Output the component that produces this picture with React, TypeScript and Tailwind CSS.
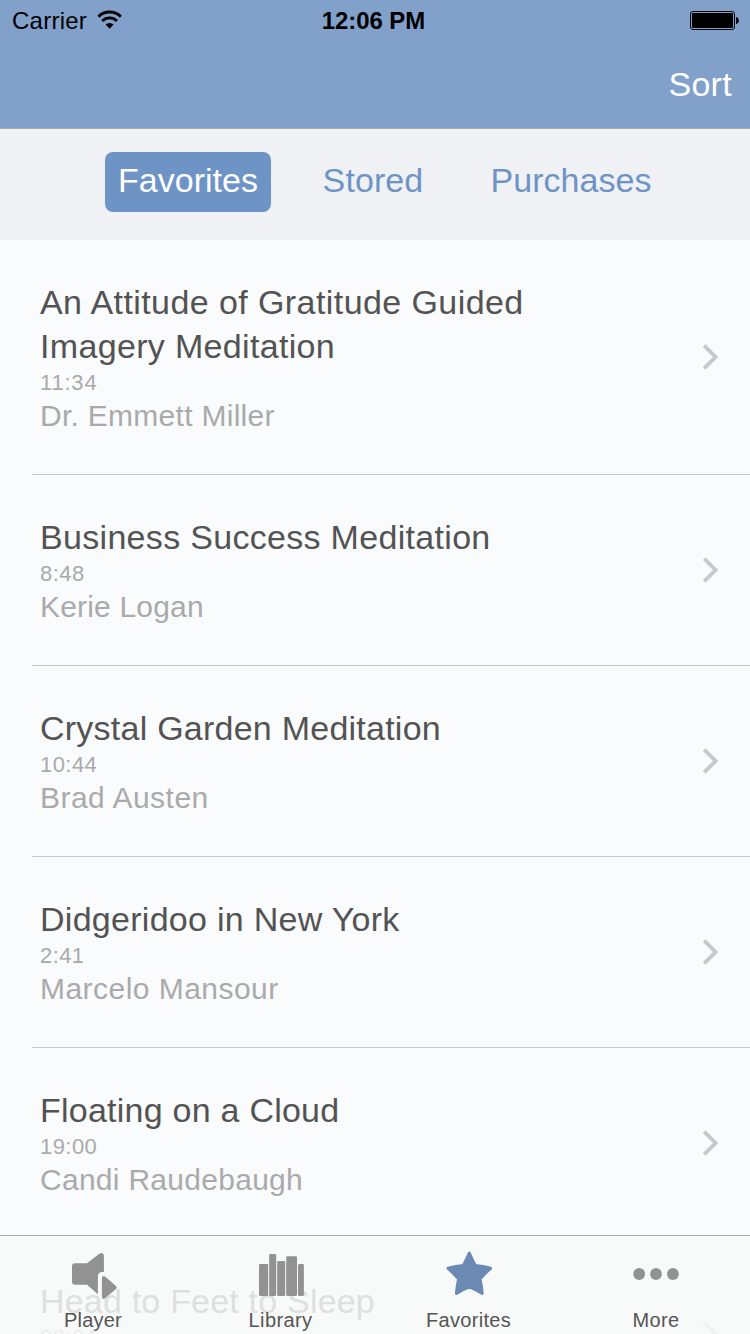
import React from "react";

const tabs = [
  { label: "Favorites", cls: "w-[166px] bg-[#6e94c6] text-white" },
  { label: "Stored", cls: "ml-[19px] w-[166px] text-[#6e94c6] tracking-[0.1px]" },
  { label: "Purchases", cls: "w-[230px] text-[#6e94c6] tracking-[0.05px]" },
];

const tracks = [
  {
    title: [
      { text: "An Attitude of Gratitude Guided", cls: "tracking-[0.42px]" },
      { text: "Imagery Meditation", cls: "tracking-[0.33px]" },
    ],
    time: "11:34", timeCls: "tracking-[0.8px]", artist: "Dr. Emmett Miller", cls: "h-[235px] border-[#c8c7cc]", artistCls: "tracking-[0.28px]",
  },
  { title: [{ text: "Business Success Meditation", cls: "tracking-[0.31px]" }], time: "8:48", timeCls: "tracking-[0.5px]", artist: "Kerie Logan", cls: "h-[191px] border-[#c8c7cc]", artistCls: "tracking-[0.18px]" },
  { title: [{ text: "Crystal Garden Meditation", cls: "tracking-[0.24px]" }], time: "10:44", timeCls: "tracking-[0.45px]", artist: "Brad Austen", cls: "h-[191px] border-[#c8c7cc]", artistCls: "tracking-[0.48px]" },
  { title: [{ text: "Didgeridoo in New York", cls: "tracking-[0.28px]" }], time: "2:41", timeCls: "tracking-[0.4px]", artist: "Marcelo Mansour", cls: "h-[191px] border-[#c8c7cc]", artistCls: "tracking-[0.46px]" },
  { title: [{ text: "Floating on a Cloud", cls: "tracking-[0.24px]" }], time: "19:00", timeCls: "tracking-[0.45px]", artist: "Candi Raudebaugh", cls: "h-[191px] border-transparent", artistCls: "tracking-[0.28px]" },
  { title: [{ text: "Head to Feet to Sleep", cls: "tracking-[0.2px]" }], time: "20:04", timeCls: "tracking-[0.45px]", artist: "", cls: "h-[191px] border-[#c8c7cc]", artistCls: "" },
];

function Wifi() {
  return (
    <svg width="26" height="20" viewBox="0 0 26 20" fill="none" stroke="#000">
      <path d="M2.400 6.700 A15.800 15.800 0 0 1 24.800 6.700" strokeWidth="3" />
      <path d="M6.200 10.900 A10.600 10.600 0 0 1 21 10.900" strokeWidth="2.800" />
      <path d="M9.600 14.500 A6 6 0 0 1 17.600 14.500 L13.600 18.700 Z" fill="#000" stroke="none" />
    </svg>
  );
}

function Battery() {
  return (
    <svg width="50" height="20" viewBox="0 0 50 20">
      <rect x="0.5" y="1.5" width="44" height="18" rx="2.6" fill="none" stroke="#000" />
      <rect x="2" y="3" width="41" height="15" rx="1.3" />
      <path d="M46 7 C49.8 7.5 49.8 13.5 46 14 Z" />
    </svg>
  );
}

function Chevron() {
  return (
    <svg width="18" height="28" viewBox="0 0 18 28" fill="none" stroke="#c7c7cc" strokeWidth="3.8">
      <path d="M2.200 2.600 L13.600 14 L2.200 25.400" />
    </svg>
  );
}

function PlayerIcon() {
  return (
    <svg width="48" height="48" viewBox="0 0 48 48" fill="#929292" className="overflow-visible">
      <path d="M6 13.300 H18 L30 4 Q34.400 1.200 34.900 5.500 V22 Q29 21.500 28.900 26 V44.300 L18 34.700 H6 Q3 34.700 3 31.700 V16.300 Q3 13.300 6 13.300 Z" />
      <path d="M32.900 28.500 Q33 24.500 36 26.600 L47 35.900 Q48.800 37.500 47 39 L36 48.300 Q33 50.300 32.900 46.500 Z" />
    </svg>
  );
}

function LibraryIcon() {
  return (
    <svg width="48" height="48" viewBox="0 0 48 48" fill="#929292">
      <rect x="2" y="14" width="9.200" height="32" rx="1.200" />
      <rect x="12.200" y="4" width="7" height="42" rx="1.200" />
      <rect x="20.200" y="11" width="8" height="35" rx="1.200" />
      <rect x="29.200" y="6.300" width="10.800" height="39.700" rx="1.200" />
      <rect x="41" y="14" width="5.900" height="32" rx="1.200" />
    </svg>
  );
}

function StarIcon() {
  return (
    <svg width="48" height="48" viewBox="0 0 48 48" fill="#6b8ab3" stroke="#6b8ab3" strokeWidth="3" strokeLinejoin="round">
      <path d="M24.300 3 Q27.200 9.500 30.300 15.500 Q38 16.200 45.600 18.300 Q39.800 23.400 35 29 Q36.600 36 37.200 43.400 Q30.800 39.400 24.300 36.800 Q17.800 39.400 11.400 43.400 Q12 36 13.600 29 Q8.800 23.400 3 18.300 Q10.600 16.200 18.300 15.500 Q21.400 9.500 24.300 3 Z" />
    </svg>
  );
}

function MoreIcon() {
  return (
    <svg width="48" height="48" viewBox="0 0 48 48" fill="#929292">
      <circle cx="7.200" cy="24" r="5.900" />
      <circle cx="24" cy="24" r="5.900" />
      <circle cx="40.900" cy="24" r="5.900" />
    </svg>
  );
}

const nav = [
  { label: "Player", Icon: PlayerIcon, cls: "w-[186px] tracking-[0.2px]" },
  { label: "Library", Icon: LibraryIcon, cls: "w-[189px] tracking-[0.4px]" },
  { label: "Favorites", Icon: StarIcon, cls: "w-[187px] tracking-[0.3px]" },
  { label: "More", Icon: MoreIcon, cls: "w-[188px] tracking-[0.4px]" },
];

export default function App() {
  return (
    <div className="relative flex h-[1334px] w-[750px] flex-col overflow-hidden bg-[#fafbfd] font-['Liberation_Sans',Arial,sans-serif]">
      <header className="flex h-[129px] shrink-0 flex-col border-b border-[#a5a8ae] bg-[#81a1cb]">
        <div className="grid h-10 grid-cols-3 text-black">
          <div className="flex items-start pl-3">
            <span className="pt-1 text-[24px] leading-[34px] tracking-[0.25px]">Carrier</span>
            <span className="ml-[9px] pt-[10px]"><Wifi /></span>
          </div>
          <span className="pr-[3px] pt-1 text-center text-[24px] font-bold leading-[34px] tracking-[-0.1px]">12:06 PM</span>
          <div className="flex justify-end pr-[10px] pt-[10px]"><Battery /></div>
        </div>
        <button className="self-end pr-[18px] pt-[22px] text-[34px] leading-[44px] tracking-[0.3px] text-white">Sort</button>
      </header>
      <nav className="flex h-[111px] shrink-0 bg-[#f0f1f5] pl-[105px] pt-[23px]">
        {tabs.map((t) => (
          <button key={t.label} className={`${t.cls} h-[60px] rounded-[8px] pb-1 text-center text-[34px] leading-[56px]`}>
            {t.label}
          </button>
        ))}
      </nav>
      <main className="shrink-0">
        {tracks.map((t) => (
          <article key={t.time} className={`${t.cls} ml-8 flex items-center justify-between border-b pr-[30px]`}>
            <div className="self-start pl-2 pt-10">
              <h2 className="text-[34px] leading-[44px] text-[#535353]">
                {t.title.map((line) => <span key={line.text} className={`block whitespace-nowrap ${line.cls}`}>{line.text}</span>)}
              </h2>
              <p className={`pt-[2px] text-[22px] leading-[26px] text-[#aaaaaa] ${t.timeCls}`}>{t.time}</p>
              <p className={`text-[30px] leading-[40px] text-[#aaaaaa] ${t.artistCls}`}>{t.artist}</p>
            </div>
            <Chevron />
          </article>
        ))}
      </main>
      <footer className="absolute inset-x-0 bottom-0 flex h-[99px] border-t border-[#a9aaac] bg-[#f7f8f8]/85">
        {nav.map(({ label, Icon, cls }) => (
          <button key={label} className={`${cls} flex flex-col items-center pt-[14px] text-[20px] leading-[24px] text-[#555555]`}>
            <Icon />
            <span className="mt-[10px]">{label}</span>
          </button>
        ))}
      </footer>
    </div>
  );
}
